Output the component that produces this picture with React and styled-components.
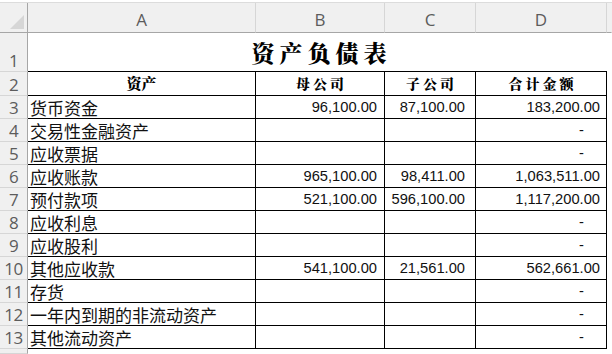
import React from "react";
import styled, { createGlobalStyle } from "styled-components";

const GlobalStyle = createGlobalStyle`
  html, body {
    margin: 0;
    padding: 0;
    background: #fff;
    overflow: hidden;
  }
  * {
    box-sizing: border-box;
  }
`;

const columns = ["A", "B", "C", "D"];

const rows = [
  { label: "货币资金", b: "96,100.00", c: "87,100.00", d: "183,200.00" },
  { label: "交易性金融资产" },
  { label: "应收票据" },
  { label: "应收账款", b: "965,100.00", c: "98,411.00", d: "1,063,511.00" },
  { label: "预付款项", b: "521,100.00", c: "596,100.00", d: "1,117,200.00" },
  { label: "应收利息" },
  { label: "应收股利" },
  { label: "其他应收款", b: "541,100.00", c: "21,561.00", d: "562,661.00" },
  { label: "存货" },
  { label: "一年内到期的非流动资产" },
  { label: "其他流动资产" },
];

const CJK = `"Noto Sans CJK SC", "Noto Sans", sans-serif`;
const CJK_SERIF = `"Noto Serif CJK SC", "Noto Sans CJK SC", serif`;

const Sheet = styled.div`
  width: 612px;
  height: 354px;
  overflow: hidden;
  display: flex;
  flex-direction: column;
`;

const TopStrip = styled.div`
  height: 3px;
  background: #fff;
  border-bottom: 1px solid #dcdcdc;
`;

const Grid = styled.div`
  flex: 1;
  display: grid;
  grid-template-columns: 28px 228px 129px 91px 131px 1fr;
  grid-template-rows: 30px 39px 24px repeat(11, 23px) 1fr;
`;

const Corner = styled.div`
  position: relative;
  background: #f0f0f0;
  border-right: 1px solid #a6a6a6;
  border-bottom: 1px solid #a6a6a6;

  &::after {
    content: "";
    position: absolute;
    right: 3px;
    bottom: 3px;
    width: 0;
    height: 0;
    border-left: 14px solid transparent;
    border-bottom: 14px solid #d6d6d6;
  }
`;

const ColHead = styled.div`
  background: #f0f0f0;
  border-right: 1px solid ${(p) => (p.$last ? "#f0f0f0" : "#d6d6d6")};
  border-bottom: 1px solid #a6a6a6;
  display: flex;
  align-items: flex-end;
  justify-content: center;
  padding-bottom: 2px;
  font-family: "Open Sans", "Liberation Sans", sans-serif;
  font-size: 17px;
  line-height: 20px;
  color: #5c5c5c;
`;

const RowHead = styled.div`
  background: #f0f0f0;
  border-right: 1px solid #a6a6a6;
  border-bottom: 1px solid #d6d6d6;
  display: flex;
  align-items: flex-end;
  justify-content: center;
  font-family: "Open Sans", "Liberation Sans", sans-serif;
  font-size: 17px;
  line-height: 20px;
  color: #5c5c5c;
  letter-spacing: -0.5px;
`;

const Title = styled.div`
  grid-column: span 4;
  border-bottom: 1px solid #000;
  display: flex;
  align-items: flex-end;
  justify-content: center;
  padding: 0 0 4px 8px;
  font-family: ${CJK_SERIF};
  font-size: 23px;
  font-weight: 900;
  line-height: 28px;
  letter-spacing: 5px;
  color: #000;
`;

const Cell = styled.div`
  border-right: 1px solid #000;
  border-bottom: 1px solid #000;
  display: flex;
  align-items: center;
  justify-content: ${(p) => (p.$right ? "flex-end" : "flex-start")};
  padding: ${(p) => (p.$right ? `0 ${p.$pad}px 0 0` : "0 0 0 2px")};
  font-family: ${(p) => (p.$num ? `"Liberation Sans", Arial, sans-serif` : CJK)};
  font-size: ${(p) => (p.$num ? "14.7px" : "17px")};
  line-height: 1;
  color: #111;
  white-space: nowrap;
`;

const HeadCell = styled.div`
  border-right: 1px solid #000;
  border-bottom: 1px solid #000;
  display: flex;
  align-items: center;
  justify-content: center;
  padding: 0 0 2px ${(p) => p.$spacing}px;
  font-family: ${CJK_SERIF};
  font-size: ${(p) => p.$size}px;
  font-weight: 900;
  letter-spacing: ${(p) => p.$spacing}px;
  line-height: 1;
  color: #000;
`;

const Blank = styled.div`
  background: #fff;
`;

export default function App() {
  return (
    <Sheet>
      <GlobalStyle />
      <TopStrip />
      <Grid>
        <Corner />
        {columns.map((c) => (
          <ColHead key={c}>{c}</ColHead>
        ))}
        <ColHead $last />

        <RowHead>1</RowHead>
        <Title>资产负债表</Title>
        <Blank />

        <RowHead>2</RowHead>
        <HeadCell $size={15} $spacing={0}>资产</HeadCell>
        <HeadCell $size={14} $spacing={3}>母公司</HeadCell>
        <HeadCell $size={14} $spacing={3}>子公司</HeadCell>
        <HeadCell $size={14} $spacing={3}>合计金额</HeadCell>
        <Blank />

        {rows.map((r, i) => (
          <React.Fragment key={r.label}>
            <RowHead>{i + 3}</RowHead>
            <Cell>{r.label}</Cell>
            <Cell $num $right $pad={7}>{r.b || ""}</Cell>
            <Cell $num $right $pad={10}>{r.c || ""}</Cell>
            <Cell $num $right $pad={r.d ? 6 : 22}>{r.d || "-"}</Cell>
            <Blank />
          </React.Fragment>
        ))}

        <RowHead />
        <Blank />
      </Grid>
    </Sheet>
  );
}
